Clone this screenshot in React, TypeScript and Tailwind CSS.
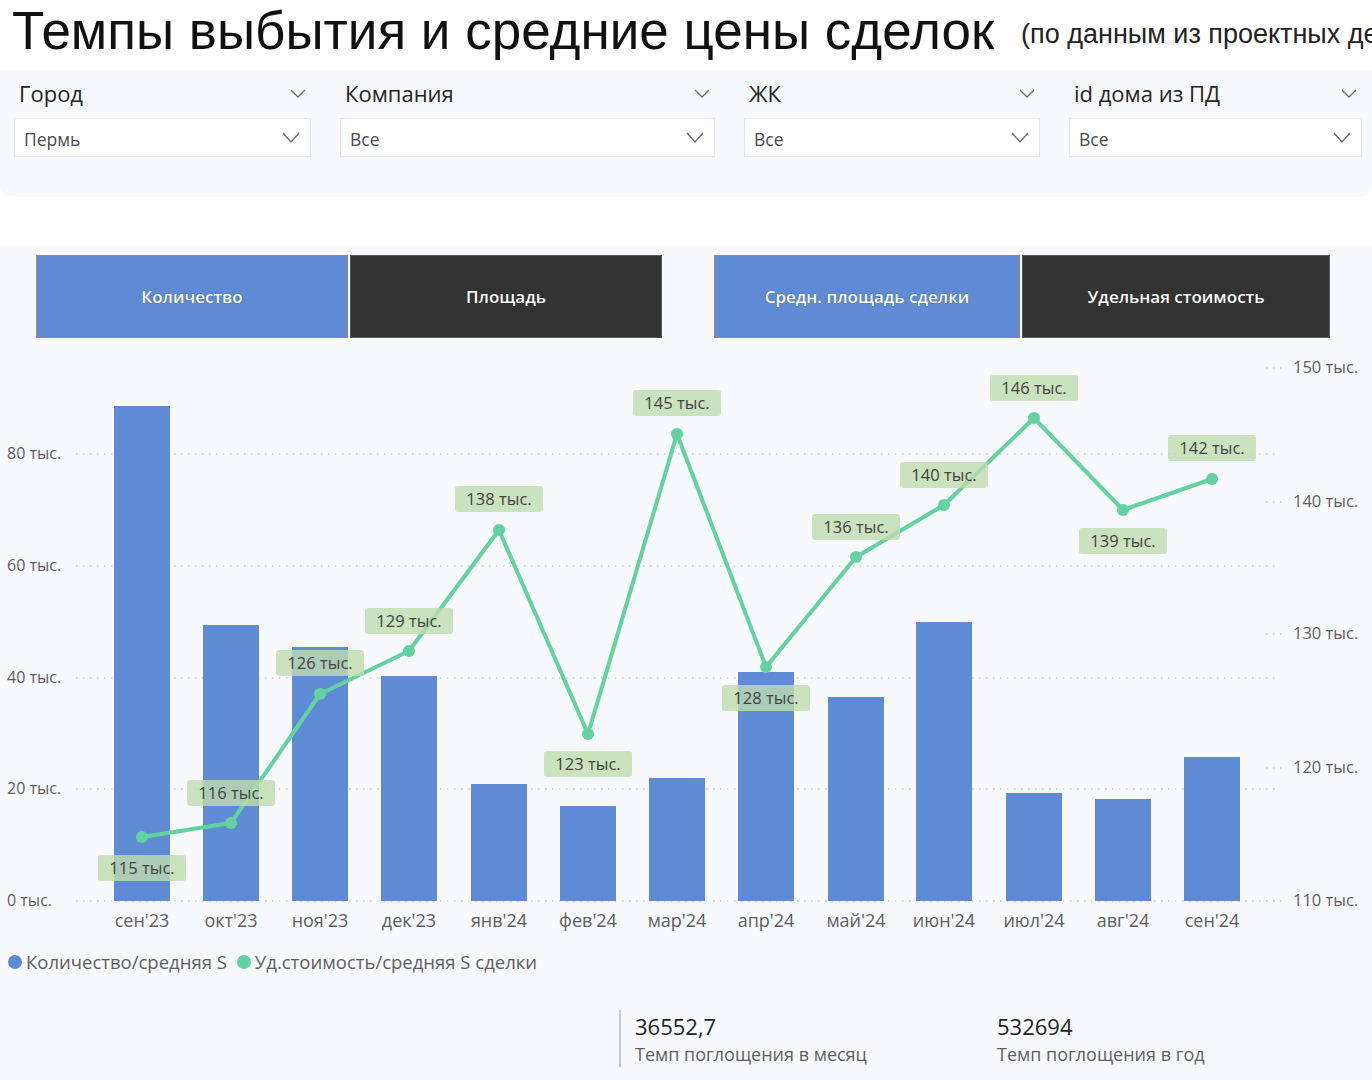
import React from "react";

const SANS = "font-['Open_Sans',_'Noto_Sans',_sans-serif]";

const filters = [
  { label: "Город", value: "Пермь", width: "w-[297px]" },
  { label: "Компания", value: "Все", width: "w-[375px]" },
  { label: "ЖК", value: "Все", width: "w-[296px]" },
  { label: "id дома из ПД", value: "Все", width: "w-[293px]" },
];

// x = bar centre, top = bar top y, ly = line point y, lab = label box centre y
const months = [
  { m: "сен'23", x: 142, top: 406, ly: 837, v: "115", lab: 868 },
  { m: "окт'23", x: 231, top: 625, ly: 823, v: "116", lab: 793 },
  { m: "ноя'23", x: 320, top: 647, ly: 694, v: "126", lab: 663 },
  { m: "дек'23", x: 409, top: 676, ly: 651, v: "129", lab: 621 },
  { m: "янв'24", x: 499, top: 784, ly: 530, v: "138", lab: 499 },
  { m: "фев'24", x: 588, top: 806, ly: 734, v: "123", lab: 764 },
  { m: "мар'24", x: 677, top: 778, ly: 434, v: "145", lab: 403 },
  { m: "апр'24", x: 766, top: 672, ly: 667, v: "128", lab: 698 },
  { m: "май'24", x: 856, top: 697, ly: 557, v: "136", lab: 527 },
  { m: "июн'24", x: 944, top: 622, ly: 505, v: "140", lab: 475 },
  { m: "июл'24", x: 1034, top: 793, ly: 418, v: "146", lab: 388 },
  { m: "авг'24", x: 1123, top: 799, ly: 510, v: "139", lab: 541 },
  { m: "сен'24", x: 1212, top: 757, ly: 479, v: "142", lab: 448 },
];

const leftTicks = [
  { y: 454, t: "80 тыс." },
  { y: 566, t: "60 тыс." },
  { y: 678, t: "40 тыс." },
  { y: 789, t: "20 тыс." },
  { y: 901, t: "0 тыс." },
];

const rightTicks = [
  { y: 368, t: "150 тыс." },
  { y: 502, t: "140 тыс." },
  { y: 634, t: "130 тыс." },
  { y: 768, t: "120 тыс." },
  { y: 901, t: "110 тыс." },
];

const BASE = 901;

function Chevron({ w = 14, h = 7 }: { w?: number; h?: number }) {
  return (
    <svg width={w + 2} height={h + 2} viewBox={`-1 -1 ${w + 2} ${h + 2}`} className="shrink-0">
      <polyline points={`0,0 ${w / 2},${h} ${w},0`} fill="none" stroke="#6b6b6b" strokeWidth="1.3" />
    </svg>
  );
}

function Filter({ label, value, width }: { label: string; value: string; width: string }) {
  return (
    <div className={`${width} flex flex-col`}>
      <div className="flex h-[28px] items-center justify-between pl-[5px] pr-[5px]">
        <span className="text-[22px] leading-none text-[#252423]">{label}</span>
        <Chevron />
      </div>
      <div className="mt-[11px] flex h-[39px] items-center justify-between border border-[#e6e8eb] bg-white pl-[9px] pr-[10px]">
        <span className="pt-[5px] text-[17.5px] leading-none text-[#4a4a4a]">{value}</span>
        <Chevron w={16} h={9} />
      </div>
    </div>
  );
}

function ToggleButton({ text, active, width }: { text: string; active: boolean; width: string }) {
  return (
    <div
      className={`${width} flex h-[83px] items-center justify-center border text-[17px] font-semibold text-white [text-shadow:0_0_1px_rgba(0,0,0,0.5)] ${
        active ? "border-[#8c8c8c] bg-[#5f8bd4]" : "border-[#5a5a5a] bg-[#333333]"
      }`}
    >
      {text}
    </div>
  );
}

function Chart() {
  const linePts = months.map((d) => `${d.x},${d.ly}`).join(" ");
  return (
    <svg width={1372} height={595} viewBox="0 345 1372 595" className="block" fontFamily="'Open Sans', 'Noto Sans', sans-serif">
      {leftTicks.map((t) => (
        <g key={t.t}>
          <line x1={76} x2={1280} y1={t.y} y2={t.y} stroke="#c9c9c9" strokeWidth={1.4} strokeDasharray="1.4 5.6" />
          <text x={7} y={t.y + 5} fontSize={16} fill="#605e5c">
            {t.t}
          </text>
        </g>
      ))}
      {rightTicks.map((t) => (
        <g key={t.t}>
          <line x1={1266} x2={1282} y1={t.y} y2={t.y} stroke="#c9c9c9" strokeWidth={1.4} strokeDasharray="1.4 5.6" />
          <text x={1293} y={t.y + 5} fontSize={16.5} fill="#605e5c">
            {t.t}
          </text>
        </g>
      ))}
      {months.map((d) => (
        <g key={d.m}>
          <rect x={d.x - 28} y={d.top} width={56} height={BASE - d.top} fill="#5f8bd4" />
          <text x={d.x} y={927} fontSize={18} fill="#605e5c" textAnchor="middle">
            {d.m}
          </text>
        </g>
      ))}
      <polyline points={linePts} fill="none" stroke="#62d3a0" strokeWidth={4} strokeLinejoin="round" />
      {months.map((d) => (
        <circle key={d.m + "p"} cx={d.x} cy={d.ly} r={6} fill="#62d3a0" />
      ))}
      {months.map((d) => (
        <g key={d.m + "l"}>
          <rect x={d.x - 44} y={d.lab - 13} width={88} height={26} rx={3} fill="#bfdcae" fillOpacity={0.8} />
          <text x={d.x} y={d.lab + 6} fontSize={16.5} fill="#444444" textAnchor="middle">
            {d.v} тыс.
          </text>
        </g>
      ))}
    </svg>
  );
}

export default function App() {
  return (
    <div className={`${SANS} h-[1080px] w-[1372px] overflow-hidden bg-white`}>
      <div className="flex h-[70px] items-center gap-[27px] overflow-hidden whitespace-nowrap pb-[10px] pl-[12px]">
        <h1 className="font-['Liberation_Sans',_Arial,_sans-serif] text-[53px] leading-none text-[#111111]">
          Темпы выбытия и средние цены сделок
        </h1>
        <span className="mt-[8px] font-['Liberation_Sans',_Arial,_sans-serif] text-[27px] text-[#222222]">
          (по данным из проектных деклараций)
        </span>
      </div>

      <div className="flex gap-[29px] rounded-b-[12px] bg-[#f7f9fc] pb-[40px] pl-[14px] pt-[9px]">
        {filters.map((f) => (
          <Filter key={f.label} {...f} />
        ))}
      </div>

      <div className="mt-[48px] h-[835px] bg-[#f7f9fc] pt-[10px]">
        <div className="flex pl-[36px]">
          <div className="flex gap-[2px]">
            <ToggleButton text="Количество" active width="w-[312px]" />
            <ToggleButton text="Площадь" active={false} width="w-[312px]" />
          </div>
          <div className="ml-[52px] flex gap-[2px]">
            <ToggleButton text="Средн. площадь сделки" active width="w-[306px]" />
            <ToggleButton text="Удельная стоимость" active={false} width="w-[308px]" />
          </div>
        </div>

        <div className="mt-[7px]">
          <Chart />
        </div>

        <div className="mt-[10px] flex h-[24px] items-center pl-[8px] text-[18.5px] text-[#605e5c]">
          <span className="mr-[4px] h-[14px] w-[14px] rounded-full bg-[#5f8bd4]" />
          <span>Количество/средняя S</span>
          <span className="ml-[10px] mr-[4px] h-[14px] w-[14px] rounded-full bg-[#62d3a0]" />
          <span>Уд.стоимость/средняя S сделки</span>
        </div>

        <div className="mt-[36px] flex h-[57px] pl-[619px]">
          <div className="w-[2px] bg-[#c8c6c4]" />
          <div className="flex w-[360px] flex-col pl-[14px]">
            <span className="text-[22px] leading-[32px] text-[#252423]">36552,7</span>
            <span className="text-[18px] leading-[24px] text-[#605e5c]">Темп поглощения в месяц</span>
          </div>
          <div className="flex flex-col pl-[16px]">
            <span className="text-[22px] leading-[32px] text-[#252423]">532694</span>
            <span className="text-[18px] leading-[24px] text-[#605e5c]">Темп поглощения в год</span>
          </div>
        </div>
      </div>
    </div>
  );
}
